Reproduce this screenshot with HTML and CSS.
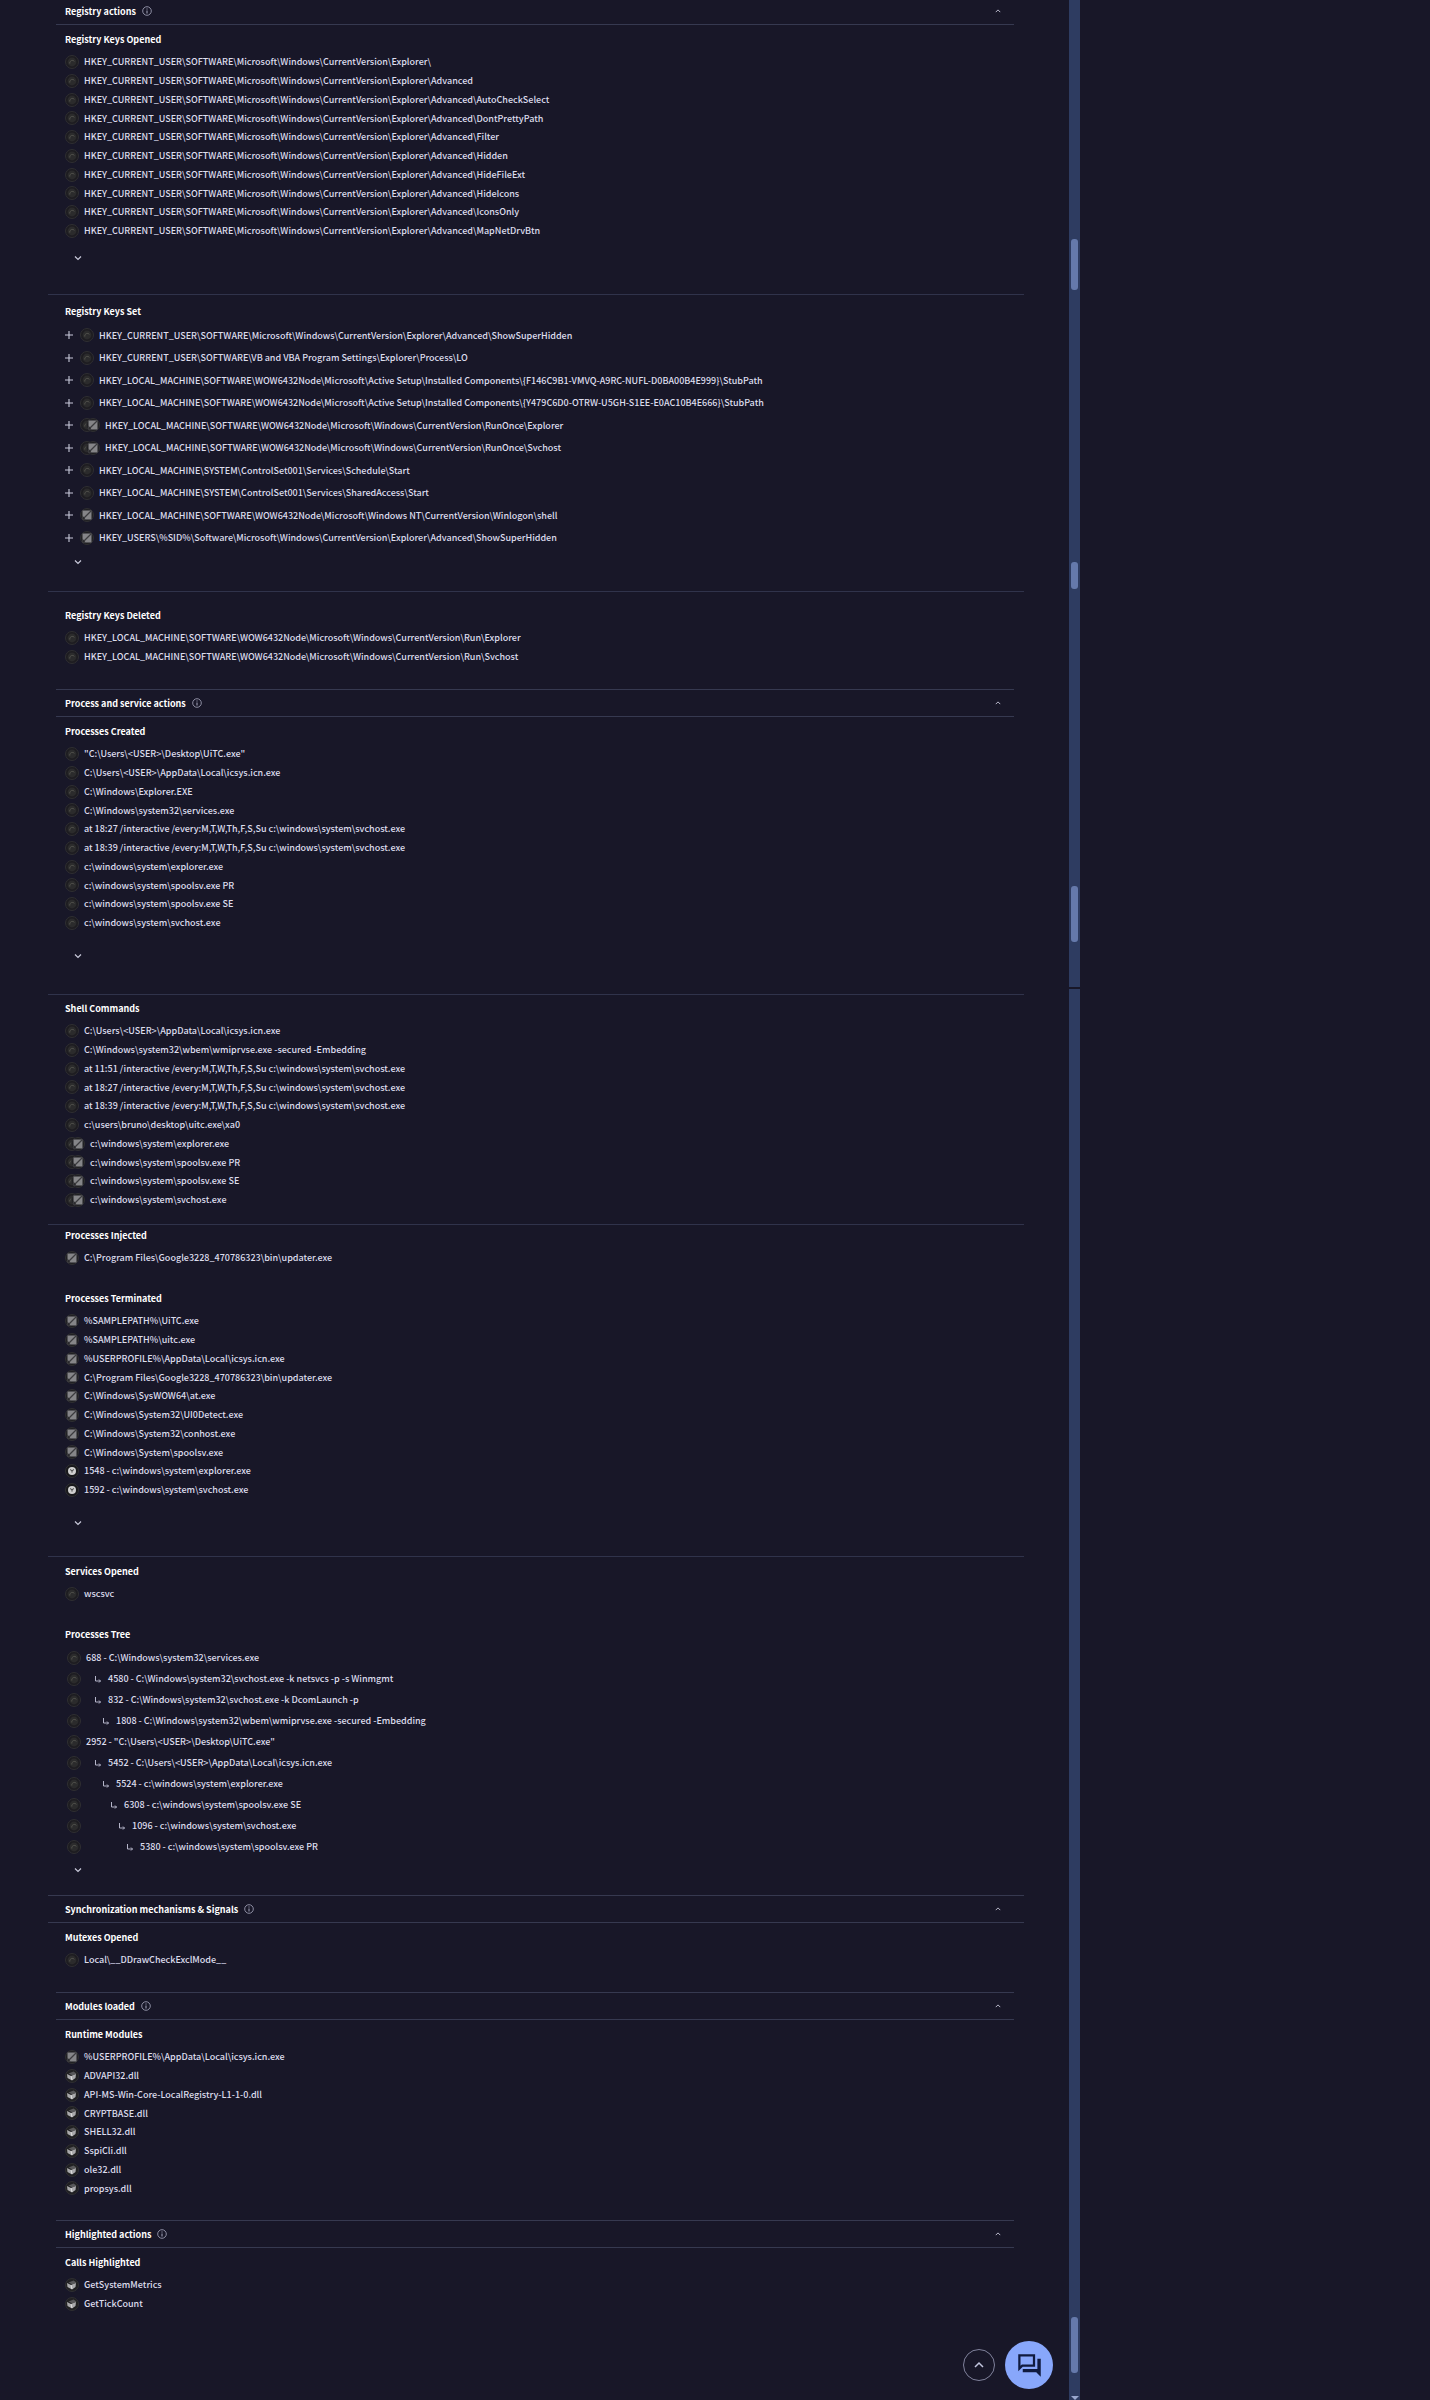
FILE: index.html
```html
<!DOCTYPE html>
<html lang="en">
<head>
<meta charset="UTF-8">
<meta name="viewport" content="width=device-width, initial-scale=1.0">
<title>Behavior report</title>
<link rel="stylesheet" href="styles.css">
</head>
<body>
    <!-- icon shapes used by the rows below -->
    <svg class="sprite" aria-hidden="true">
        <symbol id="ring" viewBox="0 0 14 14">
            <circle cx="7" cy="7" r="6.5" fill="#1d1c21" stroke="#2f2f32"/>
            <circle cx="7" cy="7" r="4.4" fill="#2b2b2c"/>
            <path d="M4.8 8.6a2.6 2.6 0 0 1 4.6-2.2" fill="none" stroke="#50504b"/>
        </symbol>
        <symbol id="box" viewBox="0 0 14 14">
            <circle cx="7" cy="7" r="6.5" fill="#1f1f22" stroke="#2f2f32"/>
            <path d="M2.5 2.5h9v9h-9z" fill="#858588"/>
            <path d="M2.5 11.5l9-9" stroke="#3b3b3e" stroke-width="1.2"/>
            <path d="M2.5 7.500v4h3z" fill="#29292c"/>
        </symbol>
        <symbol id="dot" viewBox="0 0 14 14">
            <circle cx="7" cy="7" r="6.5" fill="#18181b" stroke="#2f2f32"/>
            <circle cx="7" cy="7" r="4" fill="#cfcfcf"/>
            <path d="M5 5.6l2 1 2-1M7 6.6v2" fill="none" stroke="#444"/>
        </symbol>
        <symbol id="cube" viewBox="0 0 14 14">
            <circle cx="7" cy="7" r="6.5" fill="#202022" stroke="#2f2f32"/>
            <path d="M3.5 4.5l5-2 3 2-4 2z" fill="#58585a"/>
            <path d="M2 5l4 2 5-2-.5 4-3.500 2.500L2.500 9z" fill="#a9a9ab"/>
            <path d="M6 7l1 4" stroke="#e0e0e0"/>
        </symbol>
        <symbol id="info" viewBox="0 0 10 10">
            <circle cx="5" cy="5" r="4.300" fill="none" stroke="#a9abc0" stroke-width=".8"/>
            <path d="M5 2.500v1M5 4.500v3" stroke="#a9abc0"/>
        </symbol>
        <symbol id="down" viewBox="0 0 8 8">
            <path d="M1 2.500l3 3 3-3" fill="none" stroke="#c9cadb" stroke-width="1.200"/>
        </symbol>
        <symbol id="up" viewBox="0 0 8 8">
            <path d="M1 5.500l3-3 3 3" fill="none" stroke="#c9cadb" stroke-width="1.200"/>
        </symbol>
        <symbol id="plus" viewBox="0 0 8 8">
            <path d="M4 0v8M0 4h8" stroke="#c9cadb" stroke-width="1.100"/>
        </symbol>
        <symbol id="branch" viewBox="0 0 8 8">
            <path d="M1.500 1v5h5M5 4.500L6.500 6 5 7.500" fill="none" stroke="#b4b5c9"/>
        </symbol>
    </svg>

    <main class="report">
        <section class="panel">
            <header class="panel-head">
                <h2>Registry actions</h2>
                <svg class="info"><use href="#info"/></svg>
                <button class="toggle" type="button" aria-label="Collapse"><svg><use href="#up"/></svg></button>
            </header>
            <div class="group">
                <h3>Registry Keys Opened</h3>
                <ul class="rows">
                    <li><svg><use href="#ring"/></svg>HKEY_CURRENT_USER\SOFTWARE\Microsoft\Windows\CurrentVersion\Explorer\</li>
                    <li><svg><use href="#ring"/></svg>HKEY_CURRENT_USER\SOFTWARE\Microsoft\Windows\CurrentVersion\Explorer\Advanced</li>
                    <li><svg><use href="#ring"/></svg>HKEY_CURRENT_USER\SOFTWARE\Microsoft\Windows\CurrentVersion\Explorer\Advanced\AutoCheckSelect</li>
                    <li><svg><use href="#ring"/></svg>HKEY_CURRENT_USER\SOFTWARE\Microsoft\Windows\CurrentVersion\Explorer\Advanced\DontPrettyPath</li>
                    <li><svg><use href="#ring"/></svg>HKEY_CURRENT_USER\SOFTWARE\Microsoft\Windows\CurrentVersion\Explorer\Advanced\Filter</li>
                    <li><svg><use href="#ring"/></svg>HKEY_CURRENT_USER\SOFTWARE\Microsoft\Windows\CurrentVersion\Explorer\Advanced\Hidden</li>
                    <li><svg><use href="#ring"/></svg>HKEY_CURRENT_USER\SOFTWARE\Microsoft\Windows\CurrentVersion\Explorer\Advanced\HideFileExt</li>
                    <li><svg><use href="#ring"/></svg>HKEY_CURRENT_USER\SOFTWARE\Microsoft\Windows\CurrentVersion\Explorer\Advanced\HideIcons</li>
                    <li><svg><use href="#ring"/></svg>HKEY_CURRENT_USER\SOFTWARE\Microsoft\Windows\CurrentVersion\Explorer\Advanced\IconsOnly</li>
                    <li><svg><use href="#ring"/></svg>HKEY_CURRENT_USER\SOFTWARE\Microsoft\Windows\CurrentVersion\Explorer\Advanced\MapNetDrvBtn</li>
                </ul>
                <button class="more more-mid" type="button" aria-label="Show more"><svg><use href="#down"/></svg></button>
            </div>
            <div class="group group-keys">
                <h3>Registry Keys Set</h3>
                <ul class="rows rows-wide">
                    <li><button class="expand" type="button" aria-label="Expand"><svg><use href="#plus"/></svg></button><svg><use href="#ring"/></svg>HKEY_CURRENT_USER\SOFTWARE\Microsoft\Windows\CurrentVersion\Explorer\Advanced\ShowSuperHidden</li>
                    <li><button class="expand" type="button" aria-label="Expand"><svg><use href="#plus"/></svg></button><svg><use href="#ring"/></svg>HKEY_CURRENT_USER\SOFTWARE\VB and VBA Program Settings\Explorer\Process\LO</li>
                    <li><button class="expand" type="button" aria-label="Expand"><svg><use href="#plus"/></svg></button><svg><use href="#ring"/></svg>HKEY_LOCAL_MACHINE\SOFTWARE\WOW6432Node\Microsoft\Active Setup\Installed Components\{F146C9B1-VMVQ-A9RC-NUFL-D0BA00B4E999}\StubPath</li>
                    <li><button class="expand" type="button" aria-label="Expand"><svg><use href="#plus"/></svg></button><svg><use href="#ring"/></svg>HKEY_LOCAL_MACHINE\SOFTWARE\WOW6432Node\Microsoft\Active Setup\Installed Components\{Y479C6D0-OTRW-U5GH-S1EE-E0AC10B4E666}\StubPath</li>
                    <li><button class="expand" type="button" aria-label="Expand"><svg><use href="#plus"/></svg></button><svg><use href="#ring"/></svg><svg class="over"><use href="#box"/></svg>HKEY_LOCAL_MACHINE\SOFTWARE\WOW6432Node\Microsoft\Windows\CurrentVersion\RunOnce\Explorer</li>
                    <li><button class="expand" type="button" aria-label="Expand"><svg><use href="#plus"/></svg></button><svg><use href="#ring"/></svg><svg class="over"><use href="#box"/></svg>HKEY_LOCAL_MACHINE\SOFTWARE\WOW6432Node\Microsoft\Windows\CurrentVersion\RunOnce\Svchost</li>
                    <li><button class="expand" type="button" aria-label="Expand"><svg><use href="#plus"/></svg></button><svg><use href="#ring"/></svg>HKEY_LOCAL_MACHINE\SYSTEM\ControlSet001\Services\Schedule\Start</li>
                    <li><button class="expand" type="button" aria-label="Expand"><svg><use href="#plus"/></svg></button><svg><use href="#ring"/></svg>HKEY_LOCAL_MACHINE\SYSTEM\ControlSet001\Services\SharedAccess\Start</li>
                    <li><button class="expand" type="button" aria-label="Expand"><svg><use href="#plus"/></svg></button><svg><use href="#box"/></svg>HKEY_LOCAL_MACHINE\SOFTWARE\WOW6432Node\Microsoft\Windows NT\CurrentVersion\Winlogon\shell</li>
                    <li><button class="expand" type="button" aria-label="Expand"><svg><use href="#plus"/></svg></button><svg><use href="#box"/></svg>HKEY_USERS\%SID%\Software\Microsoft\Windows\CurrentVersion\Explorer\Advanced\ShowSuperHidden</li>
                </ul>
                <button class="more" type="button" aria-label="Show more"><svg><use href="#down"/></svg></button>
            </div>
            <div class="group group-last group-deleted">
                <h3>Registry Keys Deleted</h3>
                <ul class="rows">
                    <li><svg><use href="#ring"/></svg>HKEY_LOCAL_MACHINE\SOFTWARE\WOW6432Node\Microsoft\Windows\CurrentVersion\Run\Explorer</li>
                    <li><svg><use href="#ring"/></svg>HKEY_LOCAL_MACHINE\SOFTWARE\WOW6432Node\Microsoft\Windows\CurrentVersion\Run\Svchost</li>
                </ul>
            </div>
        </section>

        <section class="panel">
            <header class="panel-head">
                <h2>Process and service actions</h2>
                <svg class="info"><use href="#info"/></svg>
                <button class="toggle" type="button" aria-label="Collapse"><svg><use href="#up"/></svg></button>
            </header>
            <div class="group">
                <h3>Processes Created</h3>
                <ul class="rows">
                    <li><svg><use href="#ring"/></svg>"C:\Users\&lt;USER&gt;\Desktop\UiTC.exe"</li>
                    <li><svg><use href="#ring"/></svg>C:\Users\&lt;USER&gt;\AppData\Local\icsys.icn.exe</li>
                    <li><svg><use href="#ring"/></svg>C:\Windows\Explorer.EXE</li>
                    <li><svg><use href="#ring"/></svg>C:\Windows\system32\services.exe</li>
                    <li><svg><use href="#ring"/></svg>at 18:27 /interactive /every:M,T,W,Th,F,S,Su c:\windows\system\svchost.exe</li>
                    <li><svg><use href="#ring"/></svg>at 18:39 /interactive /every:M,T,W,Th,F,S,Su c:\windows\system\svchost.exe</li>
                    <li><svg><use href="#ring"/></svg>c:\windows\system\explorer.exe</li>
                    <li><svg><use href="#ring"/></svg>c:\windows\system\spoolsv.exe PR</li>
                    <li><svg><use href="#ring"/></svg>c:\windows\system\spoolsv.exe SE</li>
                    <li><svg><use href="#ring"/></svg>c:\windows\system\svchost.exe</li>
                </ul>
                <button class="more more-far" type="button" aria-label="Show more"><svg><use href="#down"/></svg></button>
            </div>
            <div class="group group-shell">
                <h3>Shell Commands</h3>
                <ul class="rows">
                    <li><svg><use href="#ring"/></svg>C:\Users\&lt;USER&gt;\AppData\Local\icsys.icn.exe</li>
                    <li><svg><use href="#ring"/></svg>C:\Windows\system32\wbem\wmiprvse.exe -secured -Embedding</li>
                    <li><svg><use href="#ring"/></svg>at 11:51 /interactive /every:M,T,W,Th,F,S,Su c:\windows\system\svchost.exe</li>
                    <li><svg><use href="#ring"/></svg>at 18:27 /interactive /every:M,T,W,Th,F,S,Su c:\windows\system\svchost.exe</li>
                    <li><svg><use href="#ring"/></svg>at 18:39 /interactive /every:M,T,W,Th,F,S,Su c:\windows\system\svchost.exe</li>
                    <li><svg><use href="#ring"/></svg>c:\users\bruno\desktop\uitc.exe\xa0</li>
                    <li><svg><use href="#ring"/></svg><svg class="over"><use href="#box"/></svg>c:\windows\system\explorer.exe</li>
                    <li><svg><use href="#ring"/></svg><svg class="over"><use href="#box"/></svg>c:\windows\system\spoolsv.exe PR</li>
                    <li><svg><use href="#ring"/></svg><svg class="over"><use href="#box"/></svg>c:\windows\system\spoolsv.exe SE</li>
                    <li><svg><use href="#ring"/></svg><svg class="over"><use href="#box"/></svg>c:\windows\system\svchost.exe</li>
                </ul>
            </div>
            <div class="group group-ended">
                <h3>Processes Injected</h3>
                <ul class="rows">
                    <li><svg><use href="#box"/></svg>C:\Program Files\Google3228_470786323\bin\updater.exe</li>
                </ul>
                <h3 class="next">Processes Terminated</h3>
                <ul class="rows">
                    <li><svg><use href="#box"/></svg>%SAMPLEPATH%\UiTC.exe</li>
                    <li><svg><use href="#box"/></svg>%SAMPLEPATH%\uitc.exe</li>
                    <li><svg><use href="#box"/></svg>%USERPROFILE%\AppData\Local\icsys.icn.exe</li>
                    <li><svg><use href="#box"/></svg>C:\Program Files\Google3228_470786323\bin\updater.exe</li>
                    <li><svg><use href="#box"/></svg>C:\Windows\SysWOW64\at.exe</li>
                    <li><svg><use href="#box"/></svg>C:\Windows\System32\UI0Detect.exe</li>
                    <li><svg><use href="#box"/></svg>C:\Windows\System32\conhost.exe</li>
                    <li><svg><use href="#box"/></svg>C:\Windows\System\spoolsv.exe</li>
                    <li><svg><use href="#dot"/></svg>1548 - c:\windows\system\explorer.exe</li>
                    <li><svg><use href="#dot"/></svg>1592 - c:\windows\system\svchost.exe</li>
                </ul>
                <button class="more more-far" type="button" aria-label="Show more"><svg><use href="#down"/></svg></button>
            </div>
            <div class="group group-last group-tree">
                <h3>Services Opened</h3>
                <ul class="rows">
                    <li><svg><use href="#ring"/></svg>wscsvc</li>
                </ul>
                <h3 class="next">Processes Tree</h3>
                <ul class="rows tree">
                    <li><svg><use href="#ring"/></svg>688 - C:\Windows\system32\services.exe</li>
                    <li><svg><use href="#ring"/></svg><svg class="branch level-1"><use href="#branch"/></svg>4580 - C:\Windows\system32\svchost.exe -k netsvcs -p -s Winmgmt</li>
                    <li><svg><use href="#ring"/></svg><svg class="branch level-1"><use href="#branch"/></svg>832 - C:\Windows\system32\svchost.exe -k DcomLaunch -p</li>
                    <li><svg><use href="#ring"/></svg><svg class="branch level-2"><use href="#branch"/></svg>1808 - C:\Windows\system32\wbem\wmiprvse.exe -secured -Embedding</li>
                    <li><svg><use href="#ring"/></svg>2952 - "C:\Users\&lt;USER&gt;\Desktop\UiTC.exe"</li>
                    <li><svg><use href="#ring"/></svg><svg class="branch level-1"><use href="#branch"/></svg>5452 - C:\Users\&lt;USER&gt;\AppData\Local\icsys.icn.exe</li>
                    <li><svg><use href="#ring"/></svg><svg class="branch level-2"><use href="#branch"/></svg>5524 - c:\windows\system\explorer.exe</li>
                    <li><svg><use href="#ring"/></svg><svg class="branch level-3"><use href="#branch"/></svg>6308 - c:\windows\system\spoolsv.exe SE</li>
                    <li><svg><use href="#ring"/></svg><svg class="branch level-4"><use href="#branch"/></svg>1096 - c:\windows\system\svchost.exe</li>
                    <li><svg><use href="#ring"/></svg><svg class="branch level-5"><use href="#branch"/></svg>5380 - c:\windows\system\spoolsv.exe PR</li>
                </ul>
                <button class="more" type="button" aria-label="Show more"><svg><use href="#down"/></svg></button>
            </div>
        </section>

        <section class="panel">
            <header class="panel-head panel-head-wide">
                <h2>Synchronization mechanisms &amp; Signals</h2>
                <svg class="info"><use href="#info"/></svg>
                <button class="toggle" type="button" aria-label="Collapse"><svg><use href="#up"/></svg></button>
            </header>
            <div class="group group-last">
                <h3>Mutexes Opened</h3>
                <ul class="rows">
                    <li><svg><use href="#ring"/></svg>Local\__DDrawCheckExclMode__</li>
                </ul>
            </div>
        </section>

        <section class="panel">
            <header class="panel-head">
                <h2>Modules loaded</h2>
                <svg class="info"><use href="#info"/></svg>
                <button class="toggle" type="button" aria-label="Collapse"><svg><use href="#up"/></svg></button>
            </header>
            <div class="group group-last">
                <h3>Runtime Modules</h3>
                <ul class="rows">
                    <li><svg><use href="#box"/></svg>%USERPROFILE%\AppData\Local\icsys.icn.exe</li>
                    <li><svg><use href="#cube"/></svg>ADVAPI32.dll</li>
                    <li><svg><use href="#cube"/></svg>API-MS-Win-Core-LocalRegistry-L1-1-0.dll</li>
                    <li><svg><use href="#cube"/></svg>CRYPTBASE.dll</li>
                    <li><svg><use href="#cube"/></svg>SHELL32.dll</li>
                    <li><svg><use href="#cube"/></svg>SspiCli.dll</li>
                    <li><svg><use href="#cube"/></svg>ole32.dll</li>
                    <li><svg><use href="#cube"/></svg>propsys.dll</li>
                </ul>
            </div>
        </section>

        <section class="panel">
            <header class="panel-head">
                <h2>Highlighted actions</h2>
                <svg class="info"><use href="#info"/></svg>
                <button class="toggle" type="button" aria-label="Collapse"><svg><use href="#up"/></svg></button>
            </header>
            <div class="group group-last">
                <h3>Calls Highlighted</h3>
                <ul class="rows">
                    <li><svg><use href="#cube"/></svg>GetSystemMetrics</li>
                    <li><svg><use href="#cube"/></svg>GetTickCount</li>
                </ul>
            </div>
        </section>

        <div class="actions">
            <button class="to-top" type="button" aria-label="Back to top"><svg viewBox="0 0 12 12"><path d="M2 8l4-4 4 4" fill="none" stroke="#c3c6df" stroke-width="1.500"/></svg></button>
            <button class="chat" type="button" aria-label="Chat"><svg viewBox="0 0 24 24"><path d="M15 4v7H5.200L4 12.200V4h11m2-2H2v15l4-4h11V2zm5 4h-3v9H6v3h12l4 4V6z" fill="#101b3f"/></svg></button>
        </div>
    </main>

    <div class="scroll" aria-hidden="true">
        <div class="track">
            <span class="thumb thumb-a"></span>
            <span class="thumb thumb-b"></span>
            <span class="thumb thumb-c"></span>
        </div>
        <div class="track track-rest">
            <span class="thumb thumb-d"></span>
            <span class="arrow"></span>
        </div>
    </div>
</body>
</html>
```
FILE: styles.css
```css
* {
    box-sizing: border-box;
}
body {
    display: flex;
    min-height: 100vh;
    margin: 0;
    padding-right: 350px;
    background-color: #181728;
    color: #dddded;
    font-family: "Noto Sans CJK SC", "Noto Sans", sans-serif;
    font-size: 9px;
    font-weight: 500;
}
h2, h3, ul {
    margin: 0;
    padding: 0;
    font-size: 9px;
}
button {
    display: flex;
    align-items: center;
    justify-content: center;
    padding: 0;
    border: none;
    background: none;
    cursor: pointer;
}
.sprite {
    display: none;
}
.report {
    flex: 1;
    min-width: 0;
    padding: 0 45px 11px 48px;
}

/* section headers */
.panel-head {
    display: flex;
    align-items: center;
    height: 28px;
    margin: 0 10px 0 8px;
    padding: 0 11px 0 9px;
    border-top: 1px solid #363950;
    border-bottom: 1px solid #363950;
}
.panel:first-child .panel-head {
    height: 25px;
    padding-bottom: 2px;
    border-top: none;
}
.panel-head-wide {
    margin: 0;
    padding: 0 21px 0 17px;
}
.panel-head h2 {
    color: #fff;
}
.info {
    width: 10px;
    height: 10px;
    margin-left: 6px;
}
.toggle {
    width: 10px;
    height: 16px;
    margin-left: auto;
}
.toggle svg {
    width: 6px;
    height: 6px;
}

/* groups */
.group {
    padding: 4px 17px 28px;
    border-bottom: 1px solid #30334b;
}
.group-keys {
    padding-top: 6px;
    padding-bottom: 21px;
}
.group-shell {
    padding-top: 3px;
    padding-bottom: 15px;
}
.group-ended {
    padding-top: 0;
    padding-bottom: 23px;
}
.group-last {
    padding-bottom: 23px;
    border-bottom: none;
}
.group-deleted {
    padding-top: 13px;
}
.group-tree {
    padding-bottom: 17px;
}
.group h3 {
    height: 22px;
    margin-bottom: 1px;
    line-height: 22px;
    color: #fff;
}
.group .next {
    margin-top: 21px;
}

/* rows */
.rows {
    list-style: none;
}
.rows li {
    display: flex;
    align-items: center;
    height: 19px;
    line-height: 19px;
    white-space: nowrap;
}
.rows li:nth-child(4n) {
    height: 18px;
}
.rows svg {
    flex: none;
    width: 14px;
    height: 14px;
    margin-right: 5px;
}
.rows .over {
    margin-left: -13px;
}
.rows.rows-wide li {
    height: 22px;
}
.rows.rows-wide li:nth-child(even) {
    height: 23px;
}
.expand {
    width: 7px;
    height: 16px;
    margin-right: 8px;
}
.rows .expand svg {
    width: 8px;
    height: 8px;
    margin: 0;
}
.rows.tree li {
    height: 21px;
    padding-left: 2px;
}
.rows .branch {
    width: 8px;
    height: 8px;
    margin-right: 6px;
}
.level-1 {
    margin-left: 8px;
}
.level-2 {
    margin-left: 16px;
}
.level-3 {
    margin-left: 24px;
}
.level-4 {
    margin-left: 32px;
}
.level-5 {
    margin-left: 40px;
}
.more {
    width: 26px;
    height: 16px;
    margin-top: 5px;
}
.more svg {
    width: 8px;
    height: 8px;
}
.more-mid {
    margin-top: 10px;
}
.more-far {
    margin-top: 16px;
    margin-bottom: 2px;
}

/* floating buttons */
.actions {
    display: flex;
    align-items: center;
    justify-content: flex-end;
    gap: 10px;
    margin: 5px -29px 0 0;
}
.to-top {
    width: 32px;
    height: 32px;
    border: 1px solid #80829c;
    border-radius: 50%;
}
.to-top svg {
    width: 12px;
    height: 12px;
}
.chat {
    width: 48px;
    height: 48px;
    border-radius: 50%;
    background-color: #88a7fb;
}
.chat svg {
    width: 27px;
    height: 27px;
}

/* scroll bar */
.scroll {
    display: flex;
    flex-direction: column;
    width: 11px;
}
.track {
    display: flex;
    flex-direction: column;
    align-items: center;
    height: 987px;
    background-color: #2e3c61;
}
.track-rest {
    flex: 1;
    margin-top: 2px;
}
.thumb {
    width: 7px;
    border-radius: 3px;
    background-color: #6579ab;
}
.thumb-a {
    height: 51px;
    margin-top: 239px;
}
.thumb-b {
    height: 27px;
    margin-top: 272px;
}
.thumb-c {
    height: 56px;
    margin-top: 297px;
}
.thumb-d {
    height: 56px;
    margin-top: auto;
}
.arrow {
    margin-top: 23px;
    border: 4px solid transparent;
    border-top-color: #9aa8cf;
    border-bottom: none;
}
```
